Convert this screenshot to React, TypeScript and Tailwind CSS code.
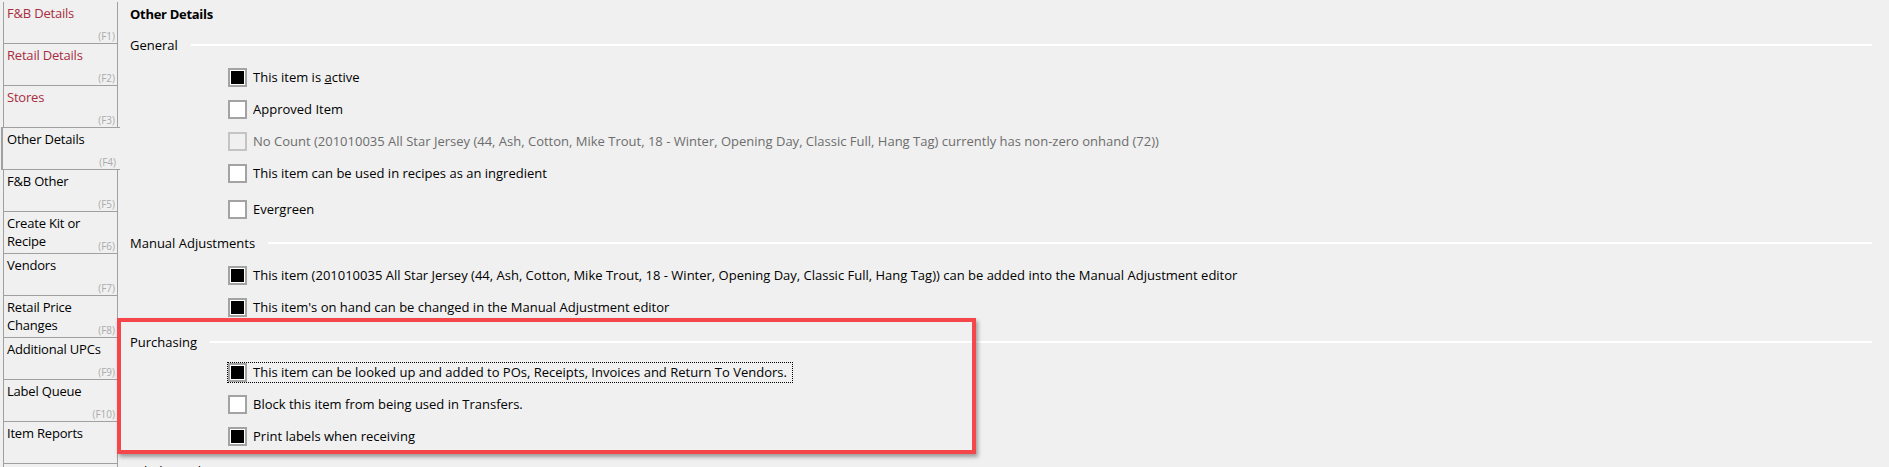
import React from "react";

type Tab = { label: string; key: string; visited?: boolean; selected?: boolean };

const tabs: Tab[] = [
  { label: "F&B Details", key: "(F1)", visited: true },
  { label: "Retail Details", key: "(F2)", visited: true },
  { label: "Stores", key: "(F3)", visited: true },
  { label: "Other Details", key: "(F4)", selected: true },
  { label: "F&B Other", key: "(F5)" },
  { label: "Create Kit or Recipe", key: "(F6)" },
  { label: "Vendors", key: "(F7)" },
  { label: "Retail Price Changes", key: "(F8)" },
  { label: "Additional UPCs", key: "(F9)" },
  { label: "Label Queue", key: "(F10)" },
  { label: "Item Reports", key: "" },
  { label: "", key: "" },
];

function SideTab({ t }: { t: Tab }) {
  if (t.selected) {
    return (
      <div className="relative z-10 -mt-[1px] ml-[1px] h-[43px] w-[119px] shrink-0 border-l-2 border-t border-b border-[#a0a0a0] bg-[#f0f0f0] pl-[4px] pt-[2px]">
        <div className="text-[13px] leading-[18px] tracking-[-0.2px] text-black">{t.label}</div>
        <span className="absolute right-[4px] bottom-[1px] text-[10px] leading-[12px] text-[#ababab]">{t.key}</span>
      </div>
    );
  }
  return (
    <div className="relative ml-[3px] h-[42px] w-[115px] shrink-0 border-l border-r border-b border-[#a0a0a0] pl-[3px] pt-[2px]">
      <div className={`text-[13px] leading-[18px] tracking-[-0.2px] ${t.visited ? "text-[#a82d3f]" : "text-black"}`}>{t.label}</div>
      {t.key && (
        <span className="absolute right-[2px] bottom-[1px] text-[10px] leading-[12px] text-[#ababab]">{t.key}</span>
      )}
    </div>
  );
}

function Header({ text, pt, h }: { text: string; pt: string; h: string }) {
  return (
    <div className={`flex shrink-0 items-start ${h} ${pt}`}>
      <div className="flex h-[14px] w-full items-center">
        <span className="whitespace-nowrap text-[13px] leading-[14px] text-black">{text}</span>
        <div className="ml-[13px] h-[2px] flex-1 bg-white" />
      </div>
    </div>
  );
}

function Box({ checked, disabled }: { checked?: boolean; disabled?: boolean }) {
  if (disabled) {
    return <div className="h-[19px] w-[19px] shrink-0 border-2 border-[#c4c4c4] bg-[#f0f0f0]" />;
  }
  return (
    <div className="flex h-[19px] w-[19px] shrink-0 items-center justify-center border-2 border-[#a3a3a3] bg-white">
      {checked && <div className="h-[13px] w-[13px] bg-black" />}
    </div>
  );
}

function Row({
  children,
  checked,
  disabled,
  focused,
  extra = "",
}: {
  children: React.ReactNode;
  checked?: boolean;
  disabled?: boolean;
  focused?: boolean;
  extra?: string;
}) {
  return (
    <div className={`flex h-[32px] shrink-0 items-center pl-[98px] ${extra}`}>
      <div className={`flex items-center ${focused ? "outline outline-1 outline-dotted outline-black pr-[5px]" : ""}`}>
        <Box checked={checked} disabled={disabled} />
        <span
          className={`ml-[6px] whitespace-nowrap text-[13px] leading-[18px] ${disabled ? "text-[#6d6d6d]" : "text-black"}`}
        >
          {children}
        </span>
      </div>
    </div>
  );
}

export default function App() {
  return (
    <div className="relative flex h-[467px] w-[1889px] overflow-hidden bg-[#f0f0f0] font-['Open_Sans','Noto_Sans',sans-serif]">
      <div className="flex w-[120px] shrink-0 flex-col pt-[2px]">
        {tabs.map((t, i) => (
          <SideTab key={i} t={t} />
        ))}
      </div>

      <div className="flex flex-1 flex-col pl-[10px] pr-[17px]">
        <div className="flex h-[30px] shrink-0 items-center">
          <span className="text-[13px] font-bold tracking-[-0.3px] text-black">Other Details</span>
        </div>
        <Header text="General" h="h-[31px]" pt="pt-[8px]" />
        <Row checked>
          This item is <u>a</u>ctive
        </Row>
        <Row>Approved Item</Row>
        <Row disabled>
          No Count (201010035 All Star Jersey (44, Ash, Cotton, Mike Trout, 18 - Winter, Opening Day, Classic Full, Hang Tag) currently has non-zero onhand (72))
        </Row>
        <Row>This item can be used in recipes as an ingredient</Row>
        <Row extra="mt-[4px]">Evergreen</Row>

        <Header text="Manual Adjustments" h="h-[34px]" pt="pt-[11px]" />
        <Row checked>
          This item (201010035 All Star Jersey (44, Ash, Cotton, Mike Trout, 18 - Winter, Opening Day, Classic Full, Hang Tag)) can be added into the Manual Adjustment editor
        </Row>
        <Row checked>This item's on hand can be changed in the Manual Adjustment editor</Row>

        <Header text="Purchasing" h="h-[33px]" pt="pt-[12px]" />
        <Row checked focused>
          This item can be looked up and added to POs, Receipts, Invoices and Return To Vendors.
        </Row>
        <Row>Block this item from being used in Transfers.</Row>
        <Row checked>Print labels when receiving</Row>

        <Header text="Label Details" h="h-[33px]" pt="pt-[12px]" />
      </div>

      <div className="pointer-events-none absolute left-[117px] top-[318px] h-[136px] w-[859px] border-[4px] border-[#f54749] shadow-[2px_3px_4px_rgba(0,0,0,0.35)]" />
    </div>
  );
}
